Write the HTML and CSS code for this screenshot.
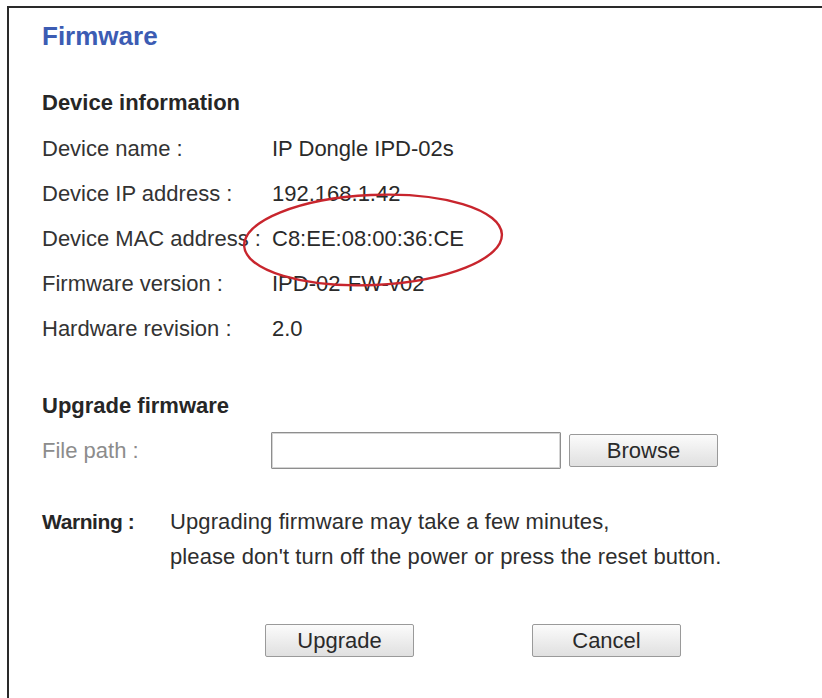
FILE: index.html
```html
<!DOCTYPE html>
<html lang="en">
<head>
<meta charset="utf-8">
<title>Firmware</title>
<link rel="stylesheet" href="styles.css">
</head>
<body>
<div class="frame">
  <h1 class="title">Firmware</h1>

  <section class="info">
    <h2 class="section-head">Device information</h2>
    <div class="info-grid">
      <div class="label">Device name :</div><div class="value">IP Dongle IPD-02s</div>
      <div class="label">Device IP address :</div><div class="value">192.168.1.42</div>
      <div class="label">Device MAC address :</div><div class="value">C8:EE:08:00:36:CE</div>
      <div class="label">Firmware version :</div><div class="value">IPD-02-FW-v02</div>
      <div class="label">Hardware revision :</div><div class="value">2.0</div>
    </div>
  </section>

  <section class="upgrade">
    <h2 class="section-head">Upgrade firmware</h2>
    <div class="file-row">
      <span class="label muted">File path :</span>
      <input class="file-input" type="text">
      <button class="btn btn-browse" type="button">Browse</button>
    </div>
    <div class="warning">
      <span class="warning-label">Warning :</span>
      <p class="warning-text">Upgrading firmware may take a few minutes,<br>please don't turn off the power or press the reset button.</p>
    </div>
    <div class="actions">
      <button class="btn" type="button">Upgrade</button>
      <button class="btn" type="button">Cancel</button>
    </div>
  </section>

  <!-- hand-drawn circle marking the MAC address -->
  <svg class="mark" width="300" height="120" viewBox="0 0 300 120" aria-hidden="true">
    <ellipse cx="150" cy="60" rx="129" ry="45" transform="rotate(-2.6 150 60)" fill="none" stroke="#c8252d" stroke-width="2.4"/>
  </svg>
</div>
</body>
</html>
```

FILE: styles.css
```css
html, body {
  margin: 0;
  padding: 0;
  background: #ffffff;
  overflow: hidden;
  height: 698px;
}

body {
  font-family: "Liberation Sans", Arial, sans-serif;
  color: #2e2e2e;
}

/* the panel continues past the right and bottom edges of the window */
.frame {
  position: relative;
  box-sizing: border-box;
  width: 840px;
  margin: 6px 0 0 7px;
  border-top: 2px solid #2a2a2a;
  border-left: 2px solid #2a2a2a;
  padding: 13px 0 0 33px;
  height: 692px;
}

.title {
  margin: 0;
  font-size: 26px;
  line-height: 30px;
  font-weight: bold;
  color: #3c5cb3;
}

.section-head {
  margin: 0;
  font-size: 22px;
  line-height: 30px;
  font-weight: bold;
  color: #262626;
}

.info {
  margin-top: 37px;
}

.info-grid {
  margin-top: 8px;
  display: grid;
  grid-template-columns: 230px auto;
  grid-auto-rows: 45px;
  font-size: 22px;
  line-height: 45px;
}

.label {
  color: #333333;
  font-size: 22px;
}

.value {
  color: #2a2a2a;
}

.muted {
  color: #8c8c8c;
}

.upgrade {
  margin-top: 40px;
}

.file-row {
  margin-top: 11px;
  display: flex;
  align-items: center;
  height: 37px;
}

.file-row .label {
  width: 229px;
  flex: none;
}

.file-input {
  box-sizing: border-box;
  width: 290px;
  height: 37px;
  margin: 0;
  padding: 0 6px;
  border: 1px solid #8e8e8e;
  box-shadow: inset 0 0 0 1px #d4d4d4;
  border-radius: 1px;
  background: #ffffff;
  font: 20px "Liberation Sans", Arial, sans-serif;
}

.btn {
  box-sizing: border-box;
  width: 149px;
  height: 33px;
  margin: 0;
  padding: 0;
  border: 1px solid #9a9a9a;
  border-radius: 2px;
  background: linear-gradient(#fbfbfb, #ececec 55%, #e0e0e0);
  font: 22px "Liberation Sans", Arial, sans-serif;
  color: #2a2a2a;
  line-height: 31px;
}

.btn-browse {
  margin-left: 8px;
}

.warning {
  margin-top: 35px;
  display: flex;
  font-size: 22px;
  line-height: 35px;
}

.warning-label {
  width: 128px;
  flex: none;
  font-weight: bold;
  font-size: 21px;
  letter-spacing: -0.4px;
  color: #262626;
}

.warning-text {
  margin: 0;
  color: #2e2e2e;
  letter-spacing: 0.1px;
}

.actions {
  margin: 50px 0 0 223px;
  display: flex;
  gap: 118px;
}

.mark {
  position: absolute;
  left: 214px;
  top: 172px;
  overflow: visible;
}
```
